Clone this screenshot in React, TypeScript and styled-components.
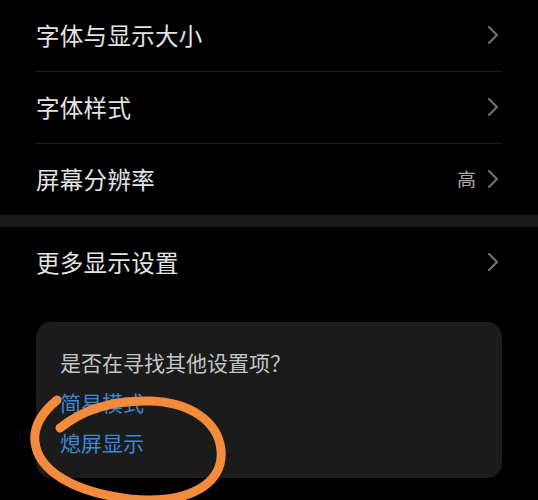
import styled, { createGlobalStyle } from "styled-components";

const GlobalStyle = createGlobalStyle`
  html, body {
    margin: 0;
    padding: 0;
    background: #000;
  }
  body {
    font-family: "Noto Sans CJK SC", "Noto Sans", sans-serif;
  }
`;

const Page = styled.div`
  position: relative;
  width: 538px;
  min-height: 500px;
  background: #000;
  overflow: hidden;
`;

const Row = styled.div`
  display: flex;
  align-items: center;
  height: 71px;
  padding: 0 39px 2px 36px;
  box-sizing: border-box;
`;

const Label = styled.span`
  flex: 1;
  font-size: 23.5px;
  color: #e3e3e3;
  letter-spacing: 0.3px;
`;

const Value = styled.span`
  font-size: 19px;
  color: #a8a8a8;
  margin-right: 11px;
`;

const Divider = styled.div`
  height: 1px;
  margin: 0 36px;
  background: #1f1f1f;
`;

const Band = styled.div`
  height: 12px;
  background: #1a1a1a;
`;

const Card = styled.div`
  margin: 24px 36px 0;
  padding: 20px 24px 16px;
  border-radius: 15px;
  background: #1b1b1b;
  display: flex;
  flex-direction: column;
`;

const CardLine = styled.span<{ $link?: boolean }>`
  line-height: 40px;
  font-size: 21px;
  color: ${(p) => (p.$link ? "#3f86d6" : "#c4c4c4")};
`;

const Scribble = styled.svg`
  position: absolute;
  left: 0;
  top: 0;
  pointer-events: none;
`;

const Chevron = () => (
  <svg width="12" height="20" viewBox="0 0 12 20">
    <polyline
      points="2,2 10,10 2,18"
      fill="none"
      stroke="#707070"
      strokeWidth="2.2"
      strokeLinecap="round"
      strokeLinejoin="round"
    />
  </svg>
);

const items = [
  { label: "字体与显示大小" },
  { label: "字体样式" },
  { label: "屏幕分辨率", value: "高" },
];

export default function App() {
  return (
    <Page>
      <GlobalStyle />
      {items.map((item, i) => (
        <div key={item.label}>
          <Row>
            <Label>{item.label}</Label>
            {item.value && <Value>{item.value}</Value>}
            <Chevron />
          </Row>
          {i < items.length - 1 && <Divider />}
        </div>
      ))}
      <Band />
      <Row>
        <Label>更多显示设置</Label>
        <Chevron />
      </Row>
      <Card>
        <CardLine>是否在寻找其他设置项？</CardLine>
        <CardLine $link>简易模式</CardLine>
        <CardLine $link>熄屏显示</CardLine>
      </Card>
      <Scribble width="538" height="500" viewBox="0 0 538 500">
        <path
          d="M57 400 C 45 410, 33 425, 35 442 C 38 470, 72 492, 130 499 C 192 505, 224 482, 221 450 C 218 420, 188 402, 150 401 C 110 400, 82 410, 60 428"
          fill="none"
          stroke="#f28c3c"
          strokeWidth="9"
          strokeLinecap="round"
          strokeLinejoin="round"
        />
      </Scribble>
    </Page>
  );
}
